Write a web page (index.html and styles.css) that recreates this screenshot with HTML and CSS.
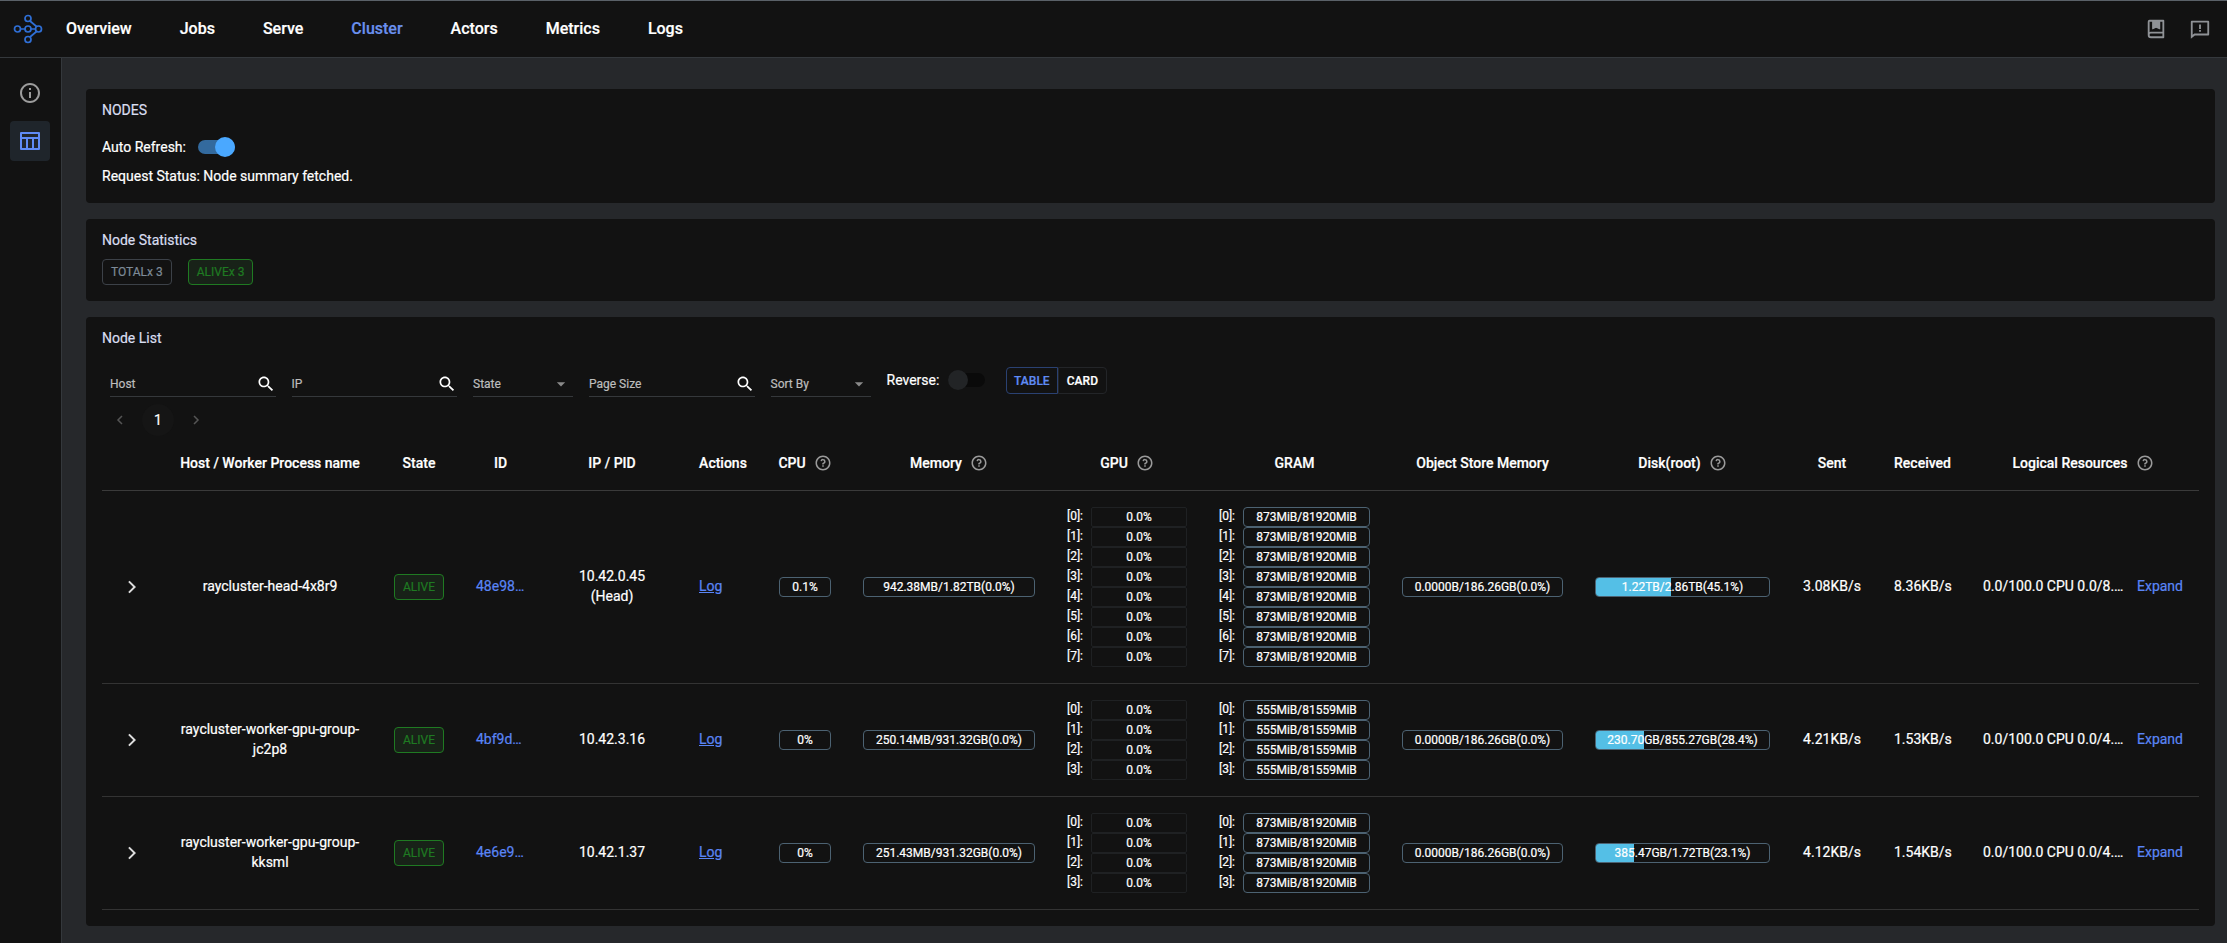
FILE: index.html
```html
<!DOCTYPE html>
<html lang="en">
<head>
  <meta charset="UTF-8">
  <title>Ray Dashboard</title>
  <link rel="stylesheet" href="styles.css">
</head>
<body>
  <header class="topbar">
    <svg class="logo" width="30" height="30" viewBox="0 0 30 30" fill="none" stroke="#2f6fd6" stroke-width="1.7">
      <circle cx="4.5" cy="15" r="3"/><circle cx="15" cy="15" r="3"/><circle cx="25.5" cy="15" r="3"/>
      <circle cx="15" cy="4.5" r="3"/><circle cx="15" cy="25.5" r="3"/>
      <path d="M7.5 15h4.5M18 15h4.5M17 7l6.5 5.5M17 23l6.5-5.5"/>
    </svg>
    <nav class="nav">
      <a>Overview</a><a>Jobs</a><a>Serve</a><a class="nav-active">Cluster</a><a>Actors</a><a>Metrics</a><a>Logs</a>
    </nav>
    <div class="top-icons">
      <svg width="22" height="22" viewBox="0 0 24 24" fill="#8f9296"><path d="M20 22H6.5A3.5 3.5 0 0 1 3 18.500V4a2 2 0 0 1 2-2h15a1 1 0 0 1 1 1v18a1 1 0 0 1-1 1zm-1-2v-3H6.500a1.500 1.500 0 0 0 0 3H19zM5 15.340A3.500 3.500 0 0 1 6.500 15H19V4h-2.500v8.500L12 10.500l-4 2V4H5v11.340z"/><path d="M8 3h8.500v9l-4.200-2L8 12z"/></svg>
      <svg width="22" height="22" viewBox="0 0 24 24" fill="#8f9296"><path d="M6.455 19L2 22.500V4a1 1 0 0 1 1-1h18a1 1 0 0 1 1 1v14a1 1 0 0 1-1 1H6.455zM4 18.385L5.763 17H20V5H4v13.385zM11 13h2v2h-2v-2zm0-6h2v5h-2V7z"/></svg>
    </div>
  </header>

  <div class="layout">
    <aside class="sidebar">
      <div class="side-item">
        <svg width="24" height="24" viewBox="0 0 24 24" fill="#9c9c9c"><path d="M12 22C6.477 22 2 17.523 2 12S6.477 2 12 2s10 4.477 10 10-4.477 10-10 10zm0-2a8 8 0 1 0 0-16 8 8 0 0 0 0 16zM11 7h2v2h-2V7zm0 4h2v6h-2v-6z"/></svg>
      </div>
      <div class="side-item side-active">
        <svg width="24" height="24" viewBox="0 0 24 24" fill="#5f8bf5"><path d="M4 8h16V5H4v3zm10 11v-9h-4v9h4zm2 0h4v-9h-4v9zm-8 0v-9H4v9h4zM3 3h18a1 1 0 0 1 1 1v16a1 1 0 0 1-1 1H3a1 1 0 0 1-1-1V4a1 1 0 0 1 1-1z"/></svg>
      </div>
    </aside>

    <main class="main">
      <section class="card card-nodes">
        <div class="card-title">NODES</div>
        <div class="refresh-row">
          <span>Auto Refresh:</span>
          <span class="switch switch-on"><span class="thumb"></span></span>
        </div>
        <div class="status">Request Status: Node summary fetched.</div>
      </section>

      <section class="card card-stats">
        <div class="card-title">Node Statistics</div>
        <div class="chips">
          <span class="chip">TOTALx 3</span>
          <span class="chip chip-alive">ALIVEx 3</span>
        </div>
      </section>

      <section class="card card-list">
        <div class="card-title">Node List</div>

        <div class="filters">
          <div class="field field-search"><span>Host</span><svg width="20" height="20" viewBox="0 0 24 24" fill="#fff"><path d="M15.500 14h-.79l-.28-.27C15.410 12.590 16 11.110 16 9.500 16 5.910 13.090 3 9.500 3S3 5.910 3 9.500 5.910 16 9.500 16c1.610 0 3.090-.59 4.230-1.570l.27.28v.79l5 4.990L20.490 19l-4.990-5zm-6 0C7.010 14 5 11.990 5 9.500S7.010 5 9.500 5 14 7.010 14 9.500 11.990 14 9.500 14z"/></svg></div>
          <div class="field field-search"><span>IP</span><svg width="20" height="20" viewBox="0 0 24 24" fill="#fff"><path d="M15.500 14h-.79l-.28-.27C15.410 12.590 16 11.110 16 9.500 16 5.910 13.090 3 9.500 3S3 5.910 3 9.500 5.910 16 9.500 16c1.610 0 3.090-.59 4.230-1.570l.27.28v.79l5 4.990L20.490 19l-4.990-5zm-6 0C7.010 14 5 11.990 5 9.500S7.010 5 9.500 5 14 7.010 14 9.500 11.990 14 9.500 14z"/></svg></div>
          <div class="field field-state"><span>State</span><svg width="20" height="20" viewBox="0 0 24 24" fill="#8a8a8a"><path d="M7 10l5 5 5-5z"/></svg></div>
          <div class="field field-search"><span>Page Size</span><svg width="20" height="20" viewBox="0 0 24 24" fill="#fff"><path d="M15.500 14h-.79l-.28-.27C15.410 12.590 16 11.110 16 9.500 16 5.910 13.090 3 9.500 3S3 5.910 3 9.500 5.910 16 9.500 16c1.610 0 3.090-.59 4.230-1.570l.27.28v.79l5 4.990L20.490 19l-4.990-5zm-6 0C7.010 14 5 11.990 5 9.500S7.010 5 9.500 5 14 7.010 14 9.500 11.990 14 9.500 14z"/></svg></div>
          <div class="field field-sort"><span>Sort By</span><svg width="20" height="20" viewBox="0 0 24 24" fill="#8a8a8a"><path d="M7 10l5 5 5-5z"/></svg></div>
          <div class="reverse">
            <span>Reverse:</span>
            <span class="switch"><span class="thumb"></span></span>
          </div>
          <div class="view-toggle">
            <span class="view-btn view-active">TABLE</span><span class="view-btn">CARD</span>
          </div>
        </div>

        <div class="pager">
          <svg class="pager-arrow" width="32" height="32" viewBox="0 0 32 32" fill="none" stroke="#555" stroke-width="1.500"><path d="M18 12l-4 4 4 4"/></svg>
          <span class="pager-num">1</span>
          <svg class="pager-arrow" width="32" height="32" viewBox="0 0 32 32" fill="none" stroke="#555" stroke-width="1.500"><path d="M14 12l4 4-4 4"/></svg>
        </div>

        <table class="nodes">
          <colgroup>
            <col class="c-expand"><col class="c-host"><col class="c-state"><col class="c-id"><col class="c-ip"><col class="c-actions"><col class="c-cpu"><col class="c-mem"><col class="c-gpu"><col class="c-gram"><col class="c-obj"><col class="c-disk"><col class="c-sent"><col class="c-recv"><col class="c-logical">
          </colgroup>
          <thead>
            <tr>
              <th></th>
              <th>Host / Worker Process name</th>
              <th>State</th>
              <th>ID</th>
              <th>IP / PID</th>
              <th>Actions</th>
              <th><span class="th-help">CPU<svg width="18" height="18" viewBox="0 0 24 24" fill="#9a9a9a"><path d="M12 22C6.477 22 2 17.523 2 12S6.477 2 12 2s10 4.477 10 10-4.477 10-10 10zm0-2a8 8 0 1 0 0-16 8 8 0 0 0 0 16zm-1-5h2v2h-2v-2zm2-1.645V14h-2v-1.500a1 1 0 0 1 1-1 1.500 1.500 0 1 0-1.471-1.794l-1.962-.393A3.500 3.500 0 1 1 13 13.355z"/></svg></span></th>
              <th><span class="th-help">Memory<svg width="18" height="18" viewBox="0 0 24 24" fill="#9a9a9a"><path d="M12 22C6.477 22 2 17.523 2 12S6.477 2 12 2s10 4.477 10 10-4.477 10-10 10zm0-2a8 8 0 1 0 0-16 8 8 0 0 0 0 16zm-1-5h2v2h-2v-2zm2-1.645V14h-2v-1.500a1 1 0 0 1 1-1 1.500 1.500 0 1 0-1.471-1.794l-1.962-.393A3.500 3.500 0 1 1 13 13.355z"/></svg></span></th>
              <th><span class="th-help">GPU<svg width="18" height="18" viewBox="0 0 24 24" fill="#9a9a9a"><path d="M12 22C6.477 22 2 17.523 2 12S6.477 2 12 2s10 4.477 10 10-4.477 10-10 10zm0-2a8 8 0 1 0 0-16 8 8 0 0 0 0 16zm-1-5h2v2h-2v-2zm2-1.645V14h-2v-1.500a1 1 0 0 1 1-1 1.500 1.500 0 1 0-1.471-1.794l-1.962-.393A3.500 3.500 0 1 1 13 13.355z"/></svg></span></th>
              <th>GRAM</th>
              <th>Object Store Memory</th>
              <th><span class="th-help">Disk(root)<svg width="18" height="18" viewBox="0 0 24 24" fill="#9a9a9a"><path d="M12 22C6.477 22 2 17.523 2 12S6.477 2 12 2s10 4.477 10 10-4.477 10-10 10zm0-2a8 8 0 1 0 0-16 8 8 0 0 0 0 16zm-1-5h2v2h-2v-2zm2-1.645V14h-2v-1.500a1 1 0 0 1 1-1 1.500 1.500 0 1 0-1.471-1.794l-1.962-.393A3.500 3.500 0 1 1 13 13.355z"/></svg></span></th>
              <th>Sent</th>
              <th>Received</th>
              <th><span class="th-help">Logical Resources<svg width="18" height="18" viewBox="0 0 24 24" fill="#9a9a9a"><path d="M12 22C6.477 22 2 17.523 2 12S6.477 2 12 2s10 4.477 10 10-4.477 10-10 10zm0-2a8 8 0 1 0 0-16 8 8 0 0 0 0 16zm-1-5h2v2h-2v-2zm2-1.645V14h-2v-1.500a1 1 0 0 1 1-1 1.500 1.500 0 1 0-1.471-1.794l-1.962-.393A3.500 3.500 0 1 1 13 13.355z"/></svg></span></th>
            </tr>
          </thead>
          <tbody>
            <tr>
              <td class="td-expand"><svg width="24" height="24" viewBox="0 0 24 24" fill="#ddd"><path d="M13.172 12l-4.950-4.950 1.414-1.414L16 12l-6.364 6.364-1.414-1.414z"/></svg></td>
              <td>raycluster-head-4x8r9</td>
              <td><span class="chip chip-alive">ALIVE</span></td>
              <td class="td-left"><a class="link">48e98…</a></td>
              <td>10.42.0.45<br>(Head)</td>
              <td class="td-left"><a class="link link-log">Log</a></td>
              <td><div class="bar">0.1%</div></td>
              <td><div class="bar">942.38MB/1.82TB(0.0%)</div></td>
              <td>
                <div class="meter"><span>[0]:</span><div class="bar bar-dim">0.0%</div></div>
                <div class="meter"><span>[1]:</span><div class="bar bar-dim">0.0%</div></div>
                <div class="meter"><span>[2]:</span><div class="bar bar-dim">0.0%</div></div>
                <div class="meter"><span>[3]:</span><div class="bar bar-dim">0.0%</div></div>
                <div class="meter"><span>[4]:</span><div class="bar bar-dim">0.0%</div></div>
                <div class="meter"><span>[5]:</span><div class="bar bar-dim">0.0%</div></div>
                <div class="meter"><span>[6]:</span><div class="bar bar-dim">0.0%</div></div>
                <div class="meter"><span>[7]:</span><div class="bar bar-dim">0.0%</div></div>
              </td>
              <td>
                <div class="meter"><span>[0]:</span><div class="bar">873MiB/81920MiB</div></div>
                <div class="meter"><span>[1]:</span><div class="bar">873MiB/81920MiB</div></div>
                <div class="meter"><span>[2]:</span><div class="bar">873MiB/81920MiB</div></div>
                <div class="meter"><span>[3]:</span><div class="bar">873MiB/81920MiB</div></div>
                <div class="meter"><span>[4]:</span><div class="bar">873MiB/81920MiB</div></div>
                <div class="meter"><span>[5]:</span><div class="bar">873MiB/81920MiB</div></div>
                <div class="meter"><span>[6]:</span><div class="bar">873MiB/81920MiB</div></div>
                <div class="meter"><span>[7]:</span><div class="bar">873MiB/81920MiB</div></div>
              </td>
              <td><div class="bar">0.0000B/186.26GB(0.0%)</div></td>
              <td><div class="bar"><span class="bar-fill" style="width: 43.500%"></span><span class="bar-text">1.22TB/2.86TB(45.1%)</span></div></td>
              <td>3.08KB/s</td>
              <td>8.36KB/s</td>
              <td><div class="logical"><span>0.0/100.0 CPU 0.0/8.…</span><a class="link">Expand</a></div></td>
            </tr>
            <tr>
              <td class="td-expand"><svg width="24" height="24" viewBox="0 0 24 24" fill="#ddd"><path d="M13.172 12l-4.950-4.950 1.414-1.414L16 12l-6.364 6.364-1.414-1.414z"/></svg></td>
              <td>raycluster-worker-gpu-group-jc2p8</td>
              <td><span class="chip chip-alive">ALIVE</span></td>
              <td class="td-left"><a class="link">4bf9d…</a></td>
              <td>10.42.3.16</td>
              <td class="td-left"><a class="link link-log">Log</a></td>
              <td><div class="bar">0%</div></td>
              <td><div class="bar">250.14MB/931.32GB(0.0%)</div></td>
              <td>
                <div class="meter"><span>[0]:</span><div class="bar bar-dim">0.0%</div></div>
                <div class="meter"><span>[1]:</span><div class="bar bar-dim">0.0%</div></div>
                <div class="meter"><span>[2]:</span><div class="bar bar-dim">0.0%</div></div>
                <div class="meter"><span>[3]:</span><div class="bar bar-dim">0.0%</div></div>
              </td>
              <td>
                <div class="meter"><span>[0]:</span><div class="bar">555MiB/81559MiB</div></div>
                <div class="meter"><span>[1]:</span><div class="bar">555MiB/81559MiB</div></div>
                <div class="meter"><span>[2]:</span><div class="bar">555MiB/81559MiB</div></div>
                <div class="meter"><span>[3]:</span><div class="bar">555MiB/81559MiB</div></div>
              </td>
              <td><div class="bar">0.0000B/186.26GB(0.0%)</div></td>
              <td><div class="bar"><span class="bar-fill" style="width: 27.500%"></span><span class="bar-text">230.70GB/855.27GB(28.4%)</span></div></td>
              <td>4.21KB/s</td>
              <td>1.53KB/s</td>
              <td><div class="logical"><span>0.0/100.0 CPU 0.0/4.…</span><a class="link">Expand</a></div></td>
            </tr>
            <tr>
              <td class="td-expand"><svg width="24" height="24" viewBox="0 0 24 24" fill="#ddd"><path d="M13.172 12l-4.950-4.950 1.414-1.414L16 12l-6.364 6.364-1.414-1.414z"/></svg></td>
              <td>raycluster-worker-gpu-group-kksml</td>
              <td><span class="chip chip-alive">ALIVE</span></td>
              <td class="td-left"><a class="link">4e6e9…</a></td>
              <td>10.42.1.37</td>
              <td class="td-left"><a class="link link-log">Log</a></td>
              <td><div class="bar">0%</div></td>
              <td><div class="bar">251.43MB/931.32GB(0.0%)</div></td>
              <td>
                <div class="meter"><span>[0]:</span><div class="bar bar-dim">0.0%</div></div>
                <div class="meter"><span>[1]:</span><div class="bar bar-dim">0.0%</div></div>
                <div class="meter"><span>[2]:</span><div class="bar bar-dim">0.0%</div></div>
                <div class="meter"><span>[3]:</span><div class="bar bar-dim">0.0%</div></div>
              </td>
              <td>
                <div class="meter"><span>[0]:</span><div class="bar">873MiB/81920MiB</div></div>
                <div class="meter"><span>[1]:</span><div class="bar">873MiB/81920MiB</div></div>
                <div class="meter"><span>[2]:</span><div class="bar">873MiB/81920MiB</div></div>
                <div class="meter"><span>[3]:</span><div class="bar">873MiB/81920MiB</div></div>
              </td>
              <td><div class="bar">0.0000B/186.26GB(0.0%)</div></td>
              <td><div class="bar"><span class="bar-fill" style="width: 22%"></span><span class="bar-text">385.47GB/1.72TB(23.1%)</span></div></td>
              <td>4.12KB/s</td>
              <td>1.54KB/s</td>
              <td><div class="logical"><span>0.0/100.0 CPU 0.0/4.…</span><a class="link">Expand</a></div></td>
            </tr>
          </tbody>
        </table>
      </section>
    </main>
  </div>
</body>
</html>
```

FILE: styles.css
```css
* { box-sizing: border-box; }
html, body { height: 100%; }
body { margin: 0; background: #26282b; color: #fff; font-family: Roboto, "Liberation Sans", sans-serif; font-size: 14px; line-height: 20px; overflow: hidden; -webkit-text-stroke: 0.2px; }

.topbar { display: flex; align-items: center; height: 58px; background: #121212; border-top: 1px solid #5a6168; border-bottom: 1px solid #34383c; padding: 0 15px 0 13px; }
.logo { flex: none; }
.nav { display: flex; gap: 48px; margin-left: 23px; font-size: 16px; font-weight: 500; }
.nav-active { color: #6a90ee; }
.top-icons { display: flex; gap: 22px; margin-left: auto; padding-right: 1px; }

.layout { display: flex; height: calc(100% - 58px); }
.sidebar { width: 62px; flex: none; background: #121212; border-right: 1px solid #34383c; padding: 15px 10px 0; }
.side-item { display: flex; align-items: center; justify-content: center; width: 40px; height: 40px; border-radius: 4px; margin-bottom: 8px; }
.side-active { background: #1f252b; }

.main { flex: 1; padding: 31px 12px 0 24px; }
.card { background: #121212; border-radius: 4px; padding: 11px 16px 16px; margin-bottom: 16px; }
.card-title { color: #d9def0; }
.card-list { padding-bottom: 16px; }

.refresh-row { display: flex; align-items: center; gap: 12px; margin-top: 16px; height: 22px; }
.status { margin-top: 8px; }
.card-nodes { height: 114px; }
.card-stats { height: 82px; }

.switch { position: relative; display: inline-block; width: 37px; height: 14px; border-radius: 7px; background: #0a0a0a; }
.switch-on { background: #336a9e; }
.thumb { position: absolute; left: 0; top: -3px; width: 20px; height: 20px; border-radius: 50%; background: #222426; }
.switch-on .thumb { left: auto; right: 0; background: #4aa8ff; }

.chips { display: flex; gap: 16px; margin-top: 9px; }
.chip { display: inline-flex; align-items: center; height: 26px; padding: 0 8px; border: 1px solid #3c4148; border-radius: 4px; font-size: 12px; color: #7d8a97; }
.chip-alive { border-color: #1f7a22; color: #1f7a22; background: #182218; }

.filters { display: flex; align-items: flex-start; margin-top: 18px; padding-left: 8px; height: 31px; }
.field { display: flex; align-items: center; justify-content: space-between; height: 24px; margin-top: 7px; margin-right: 16px; padding-bottom: 2px; border-bottom: 1px solid #35383b; font-size: 12px; color: #bdbdbd; }
.field-search { width: 165.5px; }
.field-state { width: 100px; padding-right: 2px; }
.field-sort { width: 100px; padding-right: 2px; }
.reverse { display: flex; align-items: center; gap: 9px; height: 28px; }
.view-toggle { display: flex; height: 27px; margin: 1px 0 0 20.5px; font-size: 12px; font-weight: 500; }
.view-btn { display: flex; align-items: center; justify-content: center; width: 49px; border: 1px solid #232528; border-radius: 0 4px 4px 0; }
.view-active { width: 52px; color: #5f8bf5; border-color: #2a4172; border-radius: 4px 0 0 4px; }

.pager { display: flex; align-items: center; gap: 6px; margin-top: 7px; padding-left: 2px; height: 32px; }
.pager-num { width: 32px; height: 32px; border-radius: 50%; background: #151515; display: flex; align-items: center; justify-content: center; }
.pager-arrow { flex: none; }

.nodes { width: 2097px; border-collapse: collapse; table-layout: fixed; }
.c-expand { width: 60px; }
.c-host { width: 216px; }
.c-state { width: 82px; }
.c-id { width: 81px; }
.c-ip { width: 142px; }
.c-actions { width: 80px; }
.c-cpu { width: 84px; }
.c-mem { width: 204px; }
.c-gpu { width: 152px; }
.c-gram { width: 183px; }
.c-obj { width: 193px; }
.c-disk { width: 207px; }
.c-sent { width: 92px; }
.c-recv { width: 89px; }
.c-logical { width: 232px; }

.nodes th, .nodes td { padding: 16px; text-align: center; border-bottom: 1px solid #333; overflow: hidden; }
.nodes th { height: 54px; padding: 0; font-weight: 500; border-bottom-color: #3a3a3a; }
.th-help { display: inline-flex; align-items: center; gap: 8px; }
.nodes .td-left { text-align: left; }
.td-expand svg { display: block; margin: 0 auto 0 18px; }
.nodes .td-expand { padding: 0; }

/* plain text cells sit a pixel above the bars */
.nodes tbody td:nth-child(2), .nodes tbody td:nth-child(4), .nodes tbody td:nth-child(5), .nodes tbody td:nth-child(6), .nodes tbody td:nth-child(13), .nodes tbody td:nth-child(14), .nodes tbody td:nth-child(15) { padding-top: 15px; padding-bottom: 17px; }

.link { color: #5a85f5; }
.link-log { text-decoration: underline; }

.bar { position: relative; flex: 1; height: 20px; border: 1px solid #4c6272; border-radius: 4px; font-size: 12px; line-height: 18px; text-align: center; overflow: hidden; }
.bar-dim { border-color: #1f2123; border-radius: 2px; }
.bar-fill { position: absolute; left: 0; top: 0; bottom: 0; background: #54bfe6; }
.bar-text { position: relative; }

.meter { display: flex; align-items: center; height: 20px; font-size: 12px; }
.meter > span { width: 24px; flex: none; text-align: left; margin-top: -2px; }

.logical { display: flex; justify-content: space-between; white-space: nowrap; }
```
